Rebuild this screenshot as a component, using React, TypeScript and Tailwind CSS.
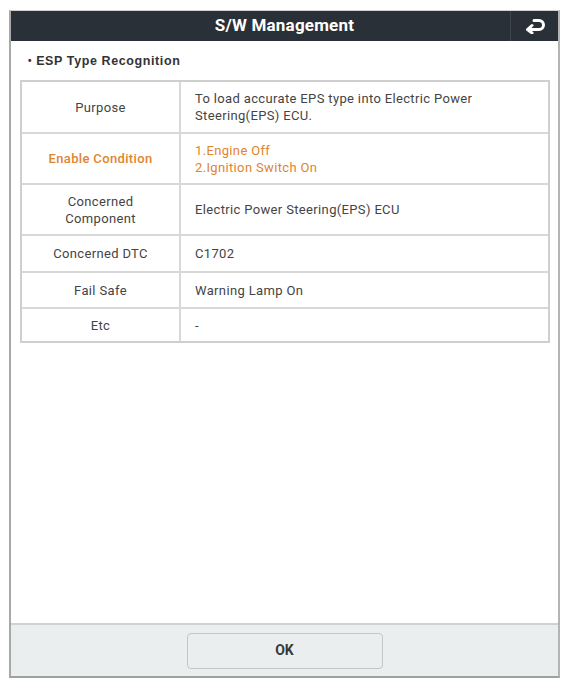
const rows = [
  { label: ["Purpose"], value: ["To load accurate EPS type into Electric Power", "Steering(EPS) ECU."], h: "h-[50px]" },
  { label: ["Enable Condition"], value: ["1.Engine Off", "2.Ignition Switch On"], h: "h-[51px]", accent: true },
  { label: ["Concerned", "Component"], value: ["Electric Power Steering(EPS) ECU"], h: "h-[51px]" },
  { label: ["Concerned DTC"], value: ["C1702"], h: "h-[37px]" },
  { label: ["Fail Safe"], value: ["Warning Lamp On"], h: "h-[36px]" },
  { label: ["Etc"], value: ["-"], h: "h-[34px]" },
]

function ReturnIcon() {
  return (
    <svg width="22" height="16" viewBox="0 0 22 16" fill="none">
      <path d="M10 2.5 H15 A4.5 4.5 0 0 1 15 11.5 H6" stroke="white" strokeWidth="3" strokeLinecap="round" />
      <path d="M8 7.5 L3.5 11.5 L8 15" stroke="white" strokeWidth="3" strokeLinecap="round" strokeLinejoin="round" />
    </svg>
  )
}

export default function App() {
  return (
    <div className="w-[570px] h-[686px] bg-white pt-[10px] pl-[9px] font-['Roboto',sans-serif]">
      <div className="w-[551px] h-[668px] flex flex-col border-t border-t-[#d0d0d0] border-l-2 border-l-[#a8a8a8] border-r-2 border-r-[#b4b4b4] border-b-2 border-b-[#a0a0a0]">
        {/* header */}
        <div className="h-[30px] bg-[#2a3038] flex items-center">
          <div className="flex-1 text-center text-white font-bold text-[17px] tracking-[0.2px] pl-[48px]">S/W Management</div>
          <div className="w-[48px] h-full border-l border-l-[#3d444d] flex items-center justify-center">
            <ReturnIcon />
          </div>
        </div>

        {/* body */}
        <div className="flex-1 bg-white pt-[11px] pl-[9px] pr-[8px]">
          <div className="text-[12.5px] font-bold text-[#333] pl-[8px] h-[28px] font-['Liberation_Sans',sans-serif] tracking-[0.6px]">
            <span className="text-[10px] align-[1px]">•</span> ESP Type Recognition
          </div>
          <div className="border-2 border-[#cfcfcf]">
            {rows.map((row, i) => (
              <div key={i} className={`flex ${row.h} ${i > 0 ? "border-t-2 border-t-[#d8d8d8]" : ""}`}>
                <div className={`w-[159px] shrink-0 border-r-2 border-r-[#d8d8d8] flex flex-col items-center justify-center text-center text-[13px] leading-[17px] tracking-[0.35px] ${row.accent ? "text-[#e0852f] font-medium" : "text-[#444]"}`}>
                  {row.label.map((l, j) => <div key={j}>{l}</div>)}
                </div>
                <div className={`flex-1 flex flex-col justify-center pl-[14px] text-[13px] leading-[17px] tracking-[0.35px] ${row.accent ? "text-[#e0852f]" : "text-[#444]"}`}>
                  {row.value.map((v, j) => <div key={j}>{v}</div>)}
                </div>
              </div>
            ))}
          </div>
        </div>

        {/* footer */}
        <div className="h-[53px] bg-[#ebeeee] border-t-2 border-t-[#cfd2d2] flex items-center justify-center">
          <button className="w-[196px] h-[36px] rounded-[4px] border border-[#c4c6c6] bg-[#ebeeee] text-[14px] font-bold text-[#3a3a3a]">OK</button>
        </div>
      </div>
    </div>
  )
}
